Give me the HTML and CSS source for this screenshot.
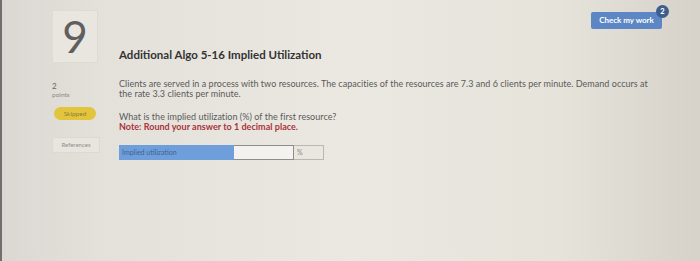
FILE: index.html
```html
<!doctype html>
<html>
    <head>
        <title>Additional Algo 5-16 Implied Utilization</title>
        <meta charset="utf-8">
        <link rel="stylesheet" href="styles.css">
    </head>
    <body>
        <div class="screen">
            <div class="question">
                <div class="side">
                    <div class="qnum">9</div>
                    <div class="points">
                        <div>2</div>
                        <small>points</small>
                    </div>
                    <span class="skipped">Skipped</span>
                    <span class="refs">References</span>
                </div>

                <div class="main">
                    <div class="topbar">
                        <span class="check">Check my work<b class="badge">2</b></span>
                    </div>
                    <h1>Additional Algo 5-16 Implied Utilization</h1>
                    <p class="text">
                        Clients are served in a process with two resources. The capacities of the resources are 7.3 and 6 clients per minute. Demand occurs at<br>
                        the rate 3.3 clients per minute.
                    </p>
                    <p class="text">
                        What is the implied utilization (%) of the first resource?<br>
                        <b class="note">Note: Round your answer to 1 decimal place.</b>
                    </p>
                    <div class="answer">
                        <span class="label">Implied utilization</span>
                        <span class="field"></span>
                        <span class="unit">%</span>
                    </div>
                </div>
            </div>
        </div>
    </body>
</html>
```

FILE: styles.css
```css
html, body {
    margin: 0;
    height: 100%;
}

body {
    font-family: Lato, 'Open Sans', sans-serif;
    color: #5a5a5a;
    background: linear-gradient(to right, #dbd8d3 0%, #e4e1db 15%, #ebe8e1 50%, #e6e3db 80%, #d6d2ca 100%);
}

.screen {
    height: 100%;
    box-sizing: border-box;
    border-left: 2px solid #6f6f6f;
}

.question {
    display: grid;
    grid-template-columns: 65px 1fr;
    padding: 10px 38px 0 50px;
}

/* left column */
.side {
    display: flex;
    flex-direction: column;
    align-items: flex-start;
}

.qnum {
    width: 46px;
    height: 53px;
    box-sizing: border-box;
    border: 1px solid #dedbd5;
    background: #e9e6e0;
    font-size: 44px;
    line-height: 51px;
    text-align: center;
    color: #5f5f5f;
}

.points {
    margin-top: 19px;
    font-size: 8px;
    line-height: 8px;
    color: #666;
}

.points small {
    font-size: 6.5px;
    color: #888;
}

.skipped {
    margin: 8px 0 0 2px;
    width: 42px;
    height: 13px;
    border-radius: 7px;
    background: #e3c53d;
    font-size: 6.5px;
    line-height: 13px;
    text-align: center;
    color: #8d7c3a;
}

.refs {
    margin-top: 17px;
    width: 48px;
    height: 16px;
    box-sizing: border-box;
    border: 1px solid #dcd9d3;
    background: #e8e5df;
    font-size: 6px;
    line-height: 14px;
    text-align: center;
    color: #8e8e8e;
}

/* main column */
.main {
    padding-left: 2px;
}

.topbar {
    display: flex;
    justify-content: flex-end;
    height: 38px;
}

.check {
    position: relative;
    margin-top: 2px;
    width: 71px;
    height: 17px;
    border-radius: 2px;
    background: #5c86c4;
    color: #fff;
    font-size: 8px;
    font-weight: bold;
    line-height: 17px;
    text-align: center;
}

.badge {
    position: absolute;
    top: -7px;
    right: -7px;
    width: 13px;
    height: 13px;
    border-radius: 50%;
    background: #3f5d8d;
    font-size: 7.5px;
    line-height: 13px;
}

h1 {
    margin: 0;
    font-size: 11.5px;
    font-weight: bold;
    line-height: 14px;
    color: #333;
}

.text {
    margin: 17px 0 0;
    font-size: 9px;
    letter-spacing: 0.03px;
    line-height: 9.5px;
    white-space: nowrap;
}

.text + .text {
    margin-top: 14px;
}

.note {
    color: #a9333b;
}

.answer {
    display: flex;
    margin-top: 14px;
    height: 15px;
}

.label {
    width: 115px;
    background: #6f9fda;
    font-size: 7px;
    line-height: 15px;
    padding-left: 3px;
    box-sizing: border-box;
    color: #3e6197;
}

.field {
    width: 60px;
    box-sizing: border-box;
    border: 1px solid #8d8d8d;
    border-left: 0;
    background: #f3f2ee;
}

.unit {
    width: 30px;
    box-sizing: border-box;
    border: 1px solid #b9b7b2;
    border-left: 0;
    font-size: 7px;
    line-height: 13px;
    padding-left: 3px;
    color: #888;
}
```
